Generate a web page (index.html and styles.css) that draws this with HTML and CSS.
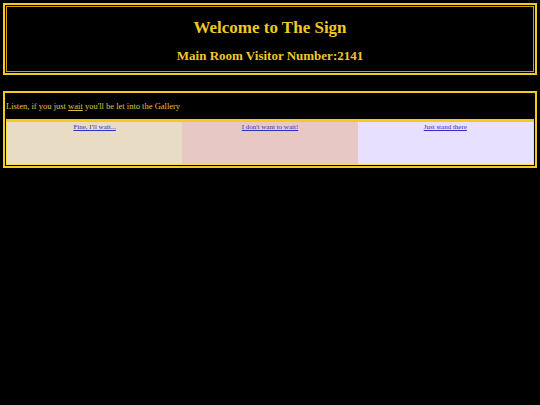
FILE: index.html
```html
<!DOCTYPE html>
<html>
<head>
<meta charset="utf-8">
<link rel="stylesheet" href="styles.css">
</head>
<body>
<div class="box header">
  <div class="cell header-cell">
    <h1 class="title">Welcome to The Sign</h1>
    <h2 class="subtitle">Main Room Visitor Number:2141</h2>
  </div>
</div>
<div class="box gallery">
  <div class="intro">Listen, if you just <a class="inline-link" href="#">wait</a> you'll be let into the Gallery</div>
  <div class="choices">
    <div class="choice beige"><a class="choice-link" href="#">Fine, I'll wait...</a></div>
    <div class="choice pink"><a class="choice-link" href="#">I don't want to wait!</a></div>
    <div class="choice lavender"><a class="choice-link" href="#">Just stand there</a></div>
  </div>
</div>
</body>
</html>
```
FILE: styles.css
```css
html, body {
  background: #000;
}
body {
  margin: 3px;
  font-family: "Liberation Serif", "DejaVu Serif", serif;
  color: #f0c828;
}
.box {
  border: 2px solid #f0cc20;
  padding: 1px;
}
.cell {
  border: 1px solid #c8a010;
}
.header {
  height: 66px;
  display: flex;
}
.header-cell {
  flex: 1;
  display: flex;
  flex-direction: column;
  align-items: center;
  justify-content: center;
  padding-top: 3px;
}
.title {
  margin: 0;
  font-size: 17px;
  font-weight: bold;
  line-height: 20px;
}
.subtitle {
  margin: 10px 0 0;
  font-size: 13px;
  font-weight: bold;
  line-height: 16px;
}
.gallery {
  margin-top: 16px;
  display: flex;
  flex-direction: column;
}
.intro {
  height: 25px;
  line-height: 25px;
  padding-left: 0;
  font-size: 8.5px;
  color: #e0c040;
  border-bottom: 3px solid #f0cc20;
}
.inline-link {
  color: #e0c040;
}
.choices {
  display: flex;
  height: 42px;
  border: 1px solid #f8e060;
  border-top: none;
}
.choice {
  flex: 1;
  text-align: center;
  font-size: 7px;
  line-height: 9px;
  padding-top: 1px;
}
.beige { background: #e8dcc4; }
.pink { background: #e8c8c4; }
.lavender { background: #e8e0ff; }
.choice-link {
  color: #3030c8;
}
```
